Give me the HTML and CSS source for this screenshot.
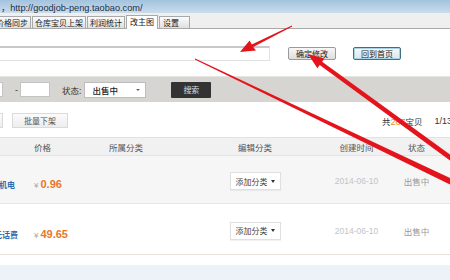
FILE: index.html
```html
<!DOCTYPE html>
<html lang="zh">
<head>
<meta charset="utf-8">
<title>改主图</title>
<link rel="stylesheet" href="styles.css">
</head>
<body>
<div class="page">
  <div class="topbar"><span class="url">，http://goodjob-peng.taobao.com/</span></div>
  <div class="tabs">
    <div class="tab tab-first">价格同步</div>
    <div class="tab">仓库宝贝上架</div>
    <div class="tab">利润统计</div>
    <div class="tab active">改主图</div>
    <div class="tab last">设置</div>
  </div>
  <div class="edit-row">
    <div class="img-input"></div>
    <div class="btn btn-ok">确定修改</div>
    <div class="btn btn-home">回到首页</div>
  </div>
  <div class="filter">
    <div class="f-input cut"></div>
    <span class="dash">-</span>
    <div class="f-input"></div>
    <span class="lbl">状态:</span>
    <div class="select"><span>出售中</span><span class="caret"></span></div>
    <div class="search">搜索</div>
  </div>
  <div class="toolbar">
    <div class="tb-btn cut"></div>
    <div class="tb-btn bulk">批量下架</div>
    <span class="count">共<em>267</em>宝贝</span>
    <span class="pages">1/13</span>
  </div>
  <div class="table">
    <div class="thead">
      <div class="c-price">价格</div>
      <div class="c-cat">所属分类</div>
      <div class="c-edit">编辑分类</div>
      <div class="c-date">创建时间</div>
      <div class="c-status">状态</div>
    </div>
    <div class="row row-odd">
      <div class="c-title"><span class="title t1">机电</span></div>
      <div class="c-price"><span class="yen">¥</span><span class="amt">0.96</span></div>
      <div class="c-edit"><div class="cat-btn">添加分类<span class="caret dark"></span></div></div>
      <div class="c-date date">2014-06-10</div>
      <div class="c-status status">出售中</div>
    </div>
    <div class="row row-even">
      <div class="c-title"><span class="title t2">元话费</span></div>
      <div class="c-price"><span class="yen">¥</span><span class="amt">49.65</span></div>
      <div class="c-edit"><div class="cat-btn">添加分类<span class="caret dark"></span></div></div>
      <div class="c-date date">2014-06-10</div>
      <div class="c-status status">出售中</div>
    </div>
  </div>
  <div class="bottom-strip"></div>

  <svg class="arrows" width="450" height="280" viewBox="0 0 450 280">
    <polygon points="291.8,25.6 251.8,44.4 249.6,40.6 240,52 256,50.6 253.2,47.0 292.2,26.4"/>
    <polygon points="308,54 324.4,58.6 322.1,61.8 471.5,170 468.5,174 319.7,65.0 317.4,68.3"/>
    <polygon points="194.8,59.4 195.2,58.6 461.3,183.3 458.7,188.7"/>
  </svg>
</div>
</body>
</html>
```

FILE: styles.css
```css
* { box-sizing: border-box; }

body {
  margin: 0;
  background: #fff;
  font-family: "Noto Sans CJK SC", "Liberation Sans", sans-serif;
}

.page {
  position: relative;
  width: 450px;
  height: 280px;
  overflow: hidden;
}

/* top address bar */
.topbar {
  height: 13px;
  padding-left: 1px;
  display: flex;
  align-items: center;
  background: linear-gradient(#a3c3de, #cadcec);
  font: 9.2px "Liberation Sans", "Noto Sans CJK SC", sans-serif;
  color: #1d2e44;
  white-space: nowrap;
}

/* tabs */
.tabs {
  height: 16px;
  display: flex;
  align-items: flex-end;
  gap: 1px;
  background: #efefef;
  border-bottom: 1px solid #a9a9a9;
}
.tab {
  height: 12px;
  padding: 0 2px;
  border: 1px solid #a9a9a9;
  border-bottom: none;
  background: linear-gradient(#fbfbfb, #e0e0e0);
  font-size: 8px;
  line-height: 11px;
  color: #222;
  white-space: nowrap;
}
.tab-first { margin-left: -7px; }
.tab.active {
  height: 14px;
  padding: 0 3px;
  margin-bottom: -1px;
  background: #fff;
  line-height: 12px;
}
.tab.last { padding: 0 10px 0 3px; }

/* image url edit row */
.edit-row {
  margin-top: 17px;
  height: 15px;
  display: flex;
  align-items: flex-start;
}
.img-input {
  width: 276px;
  height: 15px;
  margin-left: -6px;
  background: #fff;
  border: 1px solid #e2e2e2;
  border-top: 2px solid #c9c9c9;
}
.btn {
  margin-top: 1px;
  height: 13px;
  padding: 0 7px;
  border: 1px solid #9a9a9a;
  border-radius: 2px;
  background: linear-gradient(#f8f8f8, #dcdcdc);
  font-size: 8px;
  line-height: 11px;
  color: #222;
  white-space: nowrap;
}
.btn-ok { margin-left: 18px; }
.btn-home {
  margin-left: 17px;
  border-color: #3f6f80;
  box-shadow: inset 0 0 0 1px #a9d2e2;
  background: linear-gradient(#f4f8fa, #dde6ea);
}

/* filter bar */
.filter {
  margin-top: 15px;
  height: 26px;
  display: flex;
  align-items: center;
  background: #d7d5d1;
  border-top: 1px solid #e6e4e0;
}
.f-input {
  width: 30px;
  height: 15px;
  background: #fff;
  border: 1px solid #c4c4c4;
}
.f-input.cut { margin-left: -27px; }
.dash {
  width: 17px;
  padding-left: 12px;
  font: 9px "Liberation Sans", sans-serif;
  color: #333;
}
.lbl {
  margin-left: 12px;
  font-size: 8.5px;
  color: #333;
  white-space: nowrap;
}
.select {
  margin-left: 3px;
  width: 62px;
  height: 16px;
  padding: 0 5px 0 7px;
  display: flex;
  align-items: center;
  justify-content: space-between;
  background: #fff;
  border: 1px solid #bdbdbd;
  font-size: 8.5px;
  font-weight: 500;
  color: #222;
}
.caret {
  width: 0;
  height: 0;
  border-left: 2px solid transparent;
  border-right: 2px solid transparent;
  border-top: 2.5px solid #666;
}
.caret.dark { border-top-color: #333; border-left-width: 2.5px; border-right-width: 2.5px; border-top-width: 3px; }
.search {
  margin-left: 25px;
  width: 40px;
  height: 16px;
  display: flex;
  align-items: center;
  justify-content: center;
  background: #333;
  border-radius: 1px;
  font-size: 8px;
  color: #ddd;
}

/* toolbar */
.toolbar {
  margin-top: 11px;
  height: 15px;
  display: flex;
  align-items: center;
}
.tb-btn {
  height: 15px;
  display: flex;
  align-items: center;
  justify-content: center;
  border: 1px solid #dadada;
  background: linear-gradient(#fbfbfb, #ededed);
  font-size: 8px;
  color: #555;
}
.tb-btn.cut { width: 40px; margin-left: -37px; }
.tb-btn.bulk { width: 56px; margin-left: 9px; }
.count {
  margin-left: auto;
  font-size: 8.5px;
  color: #333;
  white-space: nowrap;
}
.count em {
  font-style: normal;
  font-family: "Liberation Sans", sans-serif;
  font-size: 9px;
  color: #f08a2a;
}
.pages {
  margin-left: 12px;
  margin-right: -2px;
  font: 9px "Liberation Sans", sans-serif;
  color: #333;
}

/* table */
.table {
  margin-top: 9px;
  border-top: 1px solid #e2e2e2;
}
.thead, .row {
  display: grid;
  grid-template-columns: 34px 56px 72px 38px 110px 10px 73px 47px 10px;
  align-items: center;
}
.thead {
  height: 18px;
  background: #f1f1f1;
  border-bottom: 1px solid #e3e3e3;
  font-size: 8.5px;
  color: #555;
}
.row {
  padding-top: 3px;
  border-bottom: 1px solid #e6e6e6;
}
.row-odd { height: 48px; background: #f6f6f6; }
.row-even { height: 51px; background: #fff; border-bottom-color: #ebe0dc; }

.c-title { grid-column: 1; white-space: nowrap; overflow: visible; }
.c-price { grid-column: 2; white-space: nowrap; }
.c-cat { grid-column: 3; text-align: center; white-space: nowrap; }
.c-edit { grid-column: 5; justify-self: center; text-align: center; white-space: nowrap; }
.c-date { grid-column: 7; text-align: center; white-space: nowrap; }
.c-status { grid-column: 8; text-align: center; white-space: nowrap; }

.title {
  display: inline-block;
  font-size: 8px;
  font-weight: 700;
  color: #2c6db0;
}
.t1 { margin-left: -1px; }
.t2 { margin-left: -6px; }

.yen {
  margin-right: 2px;
  font: 8px "Liberation Sans", sans-serif;
  color: #aaa;
}
.amt {
  font: bold 11px "Liberation Sans", sans-serif;
  color: #e8772e;
}
.cat-btn {
  width: 51px;
  height: 18px;
  display: flex;
  align-items: center;
  justify-content: center;
  gap: 3px;
  background: #fff;
  border: 1px solid #e0e0e0;
  box-shadow: 0 1px 1px rgba(0,0,0,0.05);
  font-size: 8px;
  color: #444;
}
.date {
  font: 8.5px "Liberation Sans", sans-serif;
  color: #c4c4c4;
}
.status {
  font-size: 8.5px;
  color: #9a9a9a;
}

.bottom-strip {
  margin-top: 10px;
  height: 15px;
  background: #edf2f9;
}

/* red annotation arrows */
.arrows {
  position: absolute;
  top: 0;
  left: 0;
  pointer-events: none;
}
.arrows polygon { fill: #e3141b; }
```
